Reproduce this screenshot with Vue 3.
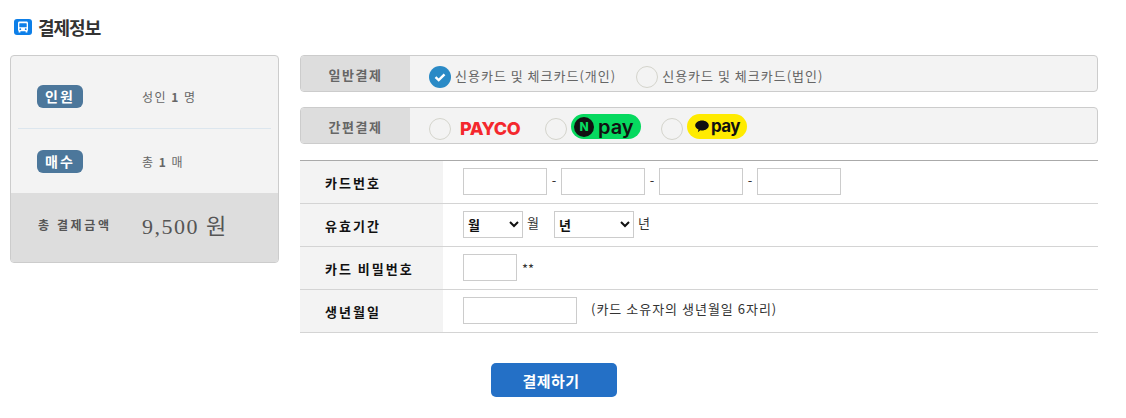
<template>
  <div class="page">
    <h2 class="title">
      <span class="title-icon">
        <svg viewBox="0 0 18 16" width="18" height="16">
          <rect width="18" height="16" rx="3" fill="#0d7fe8" />
          <path d="M5.500 2.600h7c.9 0 1.500.6 1.500 1.500v6.900c0 .5-.2.8-.6 1v1.400h-1.800v-1.200h-5.200v1.200h-1.800v-1.400c-.4-.2-.6-.5-.6-1v-6.900c0-.9.6-1.500 1.500-1.500z" fill="#fff" />
          <rect x="5.300" y="4.300" width="7.400" height="3.900" rx=".5" fill="#0d7fe8" />
          <circle cx="6.300" cy="10.200" r=".9" fill="#0d7fe8" />
          <circle cx="11.700" cy="10.200" r=".9" fill="#0d7fe8" />
        </svg>
      </span>
      결제정보
    </h2>
    <div class="content">
      <aside class="summary">
        <div class="summary-row first">
          <span class="badge">인원</span>
          <span class="summary-text">성인 <b>1</b> 명</span>
        </div>
        <div class="summary-row second">
          <span class="badge">매수</span>
          <span class="summary-text">총 <b>1</b> 매</span>
        </div>
        <div class="summary-total">
          <span class="total-label">총 결제금액</span>
          <span class="total-price">9,500 원</span>
        </div>
      </aside>

      <section class="payment">
        <div class="pay-row">
          <div class="pay-label">일반결제</div>
          <div class="pay-options">
            <label class="option">
              <span class="radio checked">
                <svg viewBox="0 0 22 22" width="22" height="22"><path d="M6.500 11.200l3.200 3 5.800-5.800" fill="none" stroke="#fff" stroke-width="2.400" /></svg>
              </span>
              신용카드 및 체크카드(개인)
            </label>
            <label class="option">
              <span class="radio"></span>
              신용카드 및 체크카드(법인)
            </label>
          </div>
        </div>
        <div class="pay-row">
          <div class="pay-label">간편결제</div>
          <div class="pay-options simple">
            <span class="radio"></span>
            <span class="payco">PAYCO</span>
            <span class="radio"></span>
            <span class="npay"><i>N</i>pay</span>
            <span class="radio"></span>
            <span class="kpay">
              <svg viewBox="0 0 14 13" width="14" height="13"><path d="M7 .5c3.600 0 6.800 2.200 6.800 5s-3.200 5-6.800 5c-.6 0-1.100-.1-1.600-.2l-2.600 2 .7-2.800c-2-.9-3.300-2.300-3.300-4 0-2.800 3.200-5 6.800-5z" fill="#111" /></svg>
              pay
            </span>
          </div>
        </div>

        <div class="card-form">
          <div class="form-row">
            <div class="form-label">카드번호</div>
            <div class="form-field">
              <input class="input card" type="text" /><span class="dash">-</span>
              <input class="input card" type="text" /><span class="dash">-</span>
              <input class="input card" type="text" /><span class="dash">-</span>
              <input class="input card" type="text" />
            </div>
          </div>
          <div class="form-row">
            <div class="form-label">유효기간</div>
            <div class="form-field">
              <select class="select month"><option>월</option></select>
              <span class="unit month-unit">월</span>
              <select class="select year"><option>년</option></select>
              <span class="unit">년</span>
            </div>
          </div>
          <div class="form-row">
            <div class="form-label">카드 비밀번호</div>
            <div class="form-field">
              <input class="input pw" type="password" />
              <span class="stars">**</span>
            </div>
          </div>
          <div class="form-row">
            <div class="form-label">생년월일</div>
            <div class="form-field">
              <input class="input birth" type="text" />
              <span class="hint">(카드 소유자의 생년월일 6자리)</span>
            </div>
          </div>
        </div>
      </section>
    </div>
    <div class="actions">
      <button class="submit" type="button">결제하기</button>
    </div>
  </div>
</template>

<script setup>
</script>

<style>
html, body {
  margin: 0;
  background: #fff;
}
</style>

<style scoped>
.page {
  width: 1098px;
  height: 418px;
  overflow: hidden;
  box-sizing: border-box;
  padding: 15px 0 0 10px;
  font-family: "Noto Sans CJK KR", "Liberation Sans", sans-serif;
  color: #333;
}
.title {
  display: flex;
  align-items: center;
  gap: 6px;
  height: 24px;
  margin: 0 0 16px 4px;
  font-size: 18px;
  font-weight: 700;
  letter-spacing: -1px;
  color: #333;
}
.title-icon {
  display: flex;
}
.content {
  display: flex;
  align-items: flex-start;
  gap: 21px;
}
.summary {
  width: 269px;
  height: 208px;
  box-sizing: border-box;
  border: 1px solid #ccc;
  border-radius: 4px;
  background: #f3f3f3;
  overflow: hidden;
  display: flex;
  flex-direction: column;
}
.summary-row {
  display: flex;
  align-items: center;
  padding-left: 26px;
  height: 64px;
  flex: none;
}
.summary-row.first {
  height: 63px;
  margin: 0 7px;
  padding: 9px 0 0 19px;
  border-bottom: 1px solid #dce6ee;
}
.badge {
  width: 46px;
  height: 23px;
  border-radius: 6px;
  background: #4c779b;
  color: #fff;
  font-size: 14px;
  font-weight: 700;
  letter-spacing: 2px;
  line-height: 22px;
  text-align: center;
}
.summary-text {
  margin-left: 59px;
  font-size: 12px;
  letter-spacing: 1.5px;
  color: #666;
}
.summary-total {
  flex: 1;
  display: flex;
  align-items: center;
  padding: 0 0 7px 27px;
  background: #dddddd;
}
.total-label {
  width: 104px;
  font-size: 12px;
  font-weight: 700;
  letter-spacing: 2.6px;
  color: #555;
}
.total-price {
  font-family: "Liberation Serif", "Noto Sans CJK KR", serif;
  font-size: 22px;
  letter-spacing: 1.5px;
  color: #555;
}
.payment {
  width: 798px;
}
.pay-row {
  display: flex;
  height: 37px;
  box-sizing: border-box;
  margin-bottom: 15px;
  border: 1px solid #ccc;
  border-radius: 4px;
  background: #f3f3f3;
  overflow: hidden;
}
.pay-label {
  width: 109px;
  background: #dddddd;
  font-size: 13px;
  font-weight: 700;
  letter-spacing: 1.6px;
  line-height: 37px;
  text-align: center;
  color: #666;
}
.pay-options {
  display: flex;
  align-items: center;
  padding-left: 19px;
  gap: 20px;
}
.pay-options.simple {
  gap: 0;
}
.option {
  display: flex;
  align-items: center;
  gap: 4px;
  padding-top: 3px;
  font-size: 13px;
  letter-spacing: 1px;
  color: #666;
}
.radio {
  width: 22px;
  height: 22px;
  box-sizing: border-box;
  border: 1px solid #d4d4cc;
  border-radius: 50%;
  flex: none;
  display: flex;
  margin-top: 6px;
}
.option .radio {
  margin-top: 3px;
}
.radio.checked {
  border: 0;
  background: #2a8ac6;
}
.payco {
  width: 85px;
  margin: 6px 0 0 9px;
  font-family: "Inter", "Liberation Sans", sans-serif;
  font-size: 18px;
  font-weight: 800;
  letter-spacing: -0.5px;
  color: #f4282d;
}
.npay {
  display: flex;
  align-items: center;
  width: 70px;
  height: 25px;
  margin: 2px 20px 0 4px;
  padding-left: 3px;
  box-sizing: border-box;
  border-radius: 13px;
  background: #06d95f;
  font-family: "Inter", "Liberation Sans", sans-serif;
  font-size: 20px;
  font-weight: 600;
  color: #111;
  line-height: 1;
}
.npay i {
  width: 20px;
  height: 20px;
  margin-right: 4px;
  border-radius: 50%;
  background: #111;
  color: #06d95f;
  font-size: 12px;
  font-style: normal;
  font-weight: 800;
  line-height: 20px;
  text-align: center;
}
.kpay {
  display: flex;
  align-items: center;
  gap: 2px;
  width: 60px;
  height: 25px;
  margin: 2px 0 0 4px;
  padding-left: 8px;
  box-sizing: border-box;
  border-radius: 13px;
  background: #ffeb00;
  font-family: "Inter", "Liberation Sans", sans-serif;
  font-size: 17px;
  font-weight: 700;
  letter-spacing: -0.6px;
  color: #111;
  line-height: 1;
}
.card-form {
  margin-top: 16px;
  border-top: 1px solid #aaa;
}
.form-row {
  display: flex;
  height: 43px;
  box-sizing: border-box;
  border-bottom: 1px solid #d4d4d4;
}
.form-label {
  width: 143px;
  box-sizing: border-box;
  padding-left: 25px;
  background: #f3f3f3;
  font-size: 13px;
  font-weight: 700;
  letter-spacing: 2px;
  line-height: 44px;
  color: #111;
}
.form-field {
  display: flex;
  align-items: center;
  padding: 0 0 2px 20px;
  font-size: 13px;
  color: #333;
}
.input {
  height: 27px;
  box-sizing: border-box;
  margin: 0;
  padding: 0;
  border: 1px solid #ccc;
  background: #fff;
}
.card {
  width: 84px;
}
.dash {
  width: 14px;
  text-align: center;
  margin-bottom: 4px;
}
.select {
  height: 27px;
  box-sizing: border-box;
  border: 1px solid #ccc;
  background: #fff;
  font-family: inherit;
  font-size: 13px;
  font-weight: 700;
  color: #111;
}
.month {
  width: 60px;
}
.year {
  width: 80px;
}
.unit {
  margin: 0 0 4px 4px;
}
.month-unit {
  width: 27px;
}
.pw {
  width: 54px;
}
.stars {
  margin-left: 5px;
  margin-top: 3px;
}
.birth {
  width: 114px;
}
.hint {
  margin-left: 14px;
  margin-bottom: 3px;
  letter-spacing: 1px;
}
.actions {
  display: flex;
  justify-content: center;
  padding-top: 30px;
}
.submit {
  width: 126px;
  height: 34px;
  padding: 0 6px 0 0;
  border: 0;
  border-radius: 5px;
  background: #2470c6;
  color: #fff;
  font-family: inherit;
  font-size: 15px;
  font-weight: 700;
  letter-spacing: 0.4px;
}
</style>
